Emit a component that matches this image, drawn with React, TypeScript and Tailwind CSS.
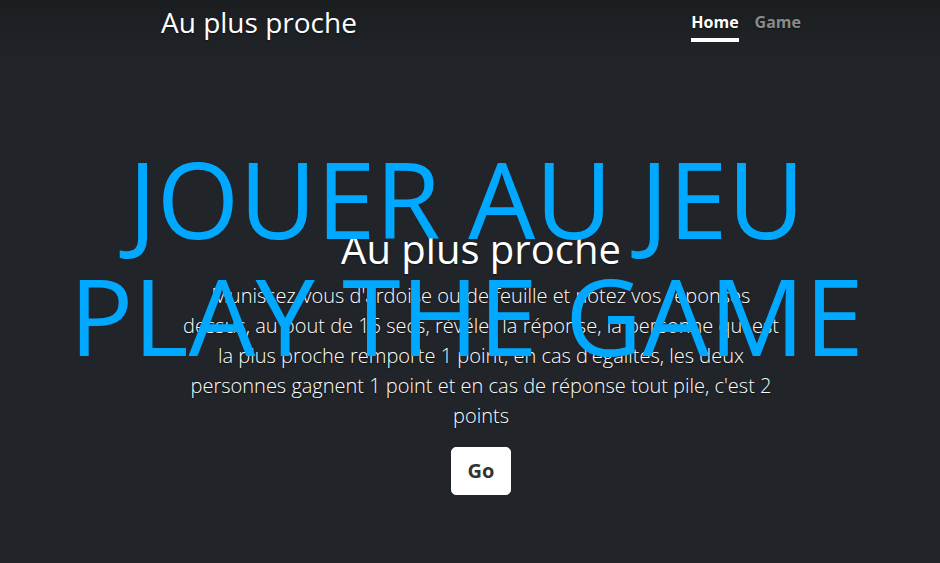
import React from "react";

const rules =
  "Munissez-vous d'ardoise ou de feuille et notez vos réponses dessus, au bout de 15 secs, révéler la réponse, la personne qui est la plus proche remporte 1 point, en cas d'égalités, les deux personnes gagnent 1 point et en cas de réponse tout pile, c'est 2 points";

function Header() {
  return (
    <header className="flex items-start justify-between pt-[6px]">
      <h3 className="text-[28px] font-normal leading-[1.2]">Au plus proche</h3>
      <nav className="flex gap-4">
        <a
          href="#"
          className="border-b-4 border-white py-1 text-base font-bold leading-6 text-white"
        >
          Home
        </a>
        <a
          href="#"
          className="border-b-4 border-transparent py-1 text-base font-bold leading-6 text-white/50"
        >
          Game
        </a>
      </nav>
    </header>
  );
}

function App() {
  return (
    <div className="relative min-h-screen overflow-hidden bg-[#212529] bg-[linear-gradient(to_bottom,#1b1e21,#212529_70px)] font-['Open_Sans','Noto_Sans',sans-serif] text-white">
      <div className="pl-[22px]">
        <div className="mx-auto w-[640px] [text-shadow:0_0.05rem_0.1rem_rgba(0,0,0,0.5)]">
          <Header />
          <main className="mt-[183px] px-4 text-center">
            <h1 className="mb-2 text-[40px] font-normal leading-[1.2]">
              Au plus proche
            </h1>
            <p className="mb-4 text-xl font-light leading-[1.5]">{rules}</p>
            <p className="text-xl leading-[1.5]">
              <a
                href="#"
                className="inline-block rounded-[5px] border border-white bg-white px-4 py-2 font-bold text-[#333] [text-shadow:none]"
              >
                Go
              </a>
            </p>
          </main>
        </div>
      </div>
      <div className="pointer-events-none absolute inset-x-0 top-[140px] pr-[7px] text-center text-[106px] leading-[117px] text-[#00a8ff]">
        JOUER AU JEU
        <br />
        PLAY THE GAME
      </div>
    </div>
  );
}

export default App;
